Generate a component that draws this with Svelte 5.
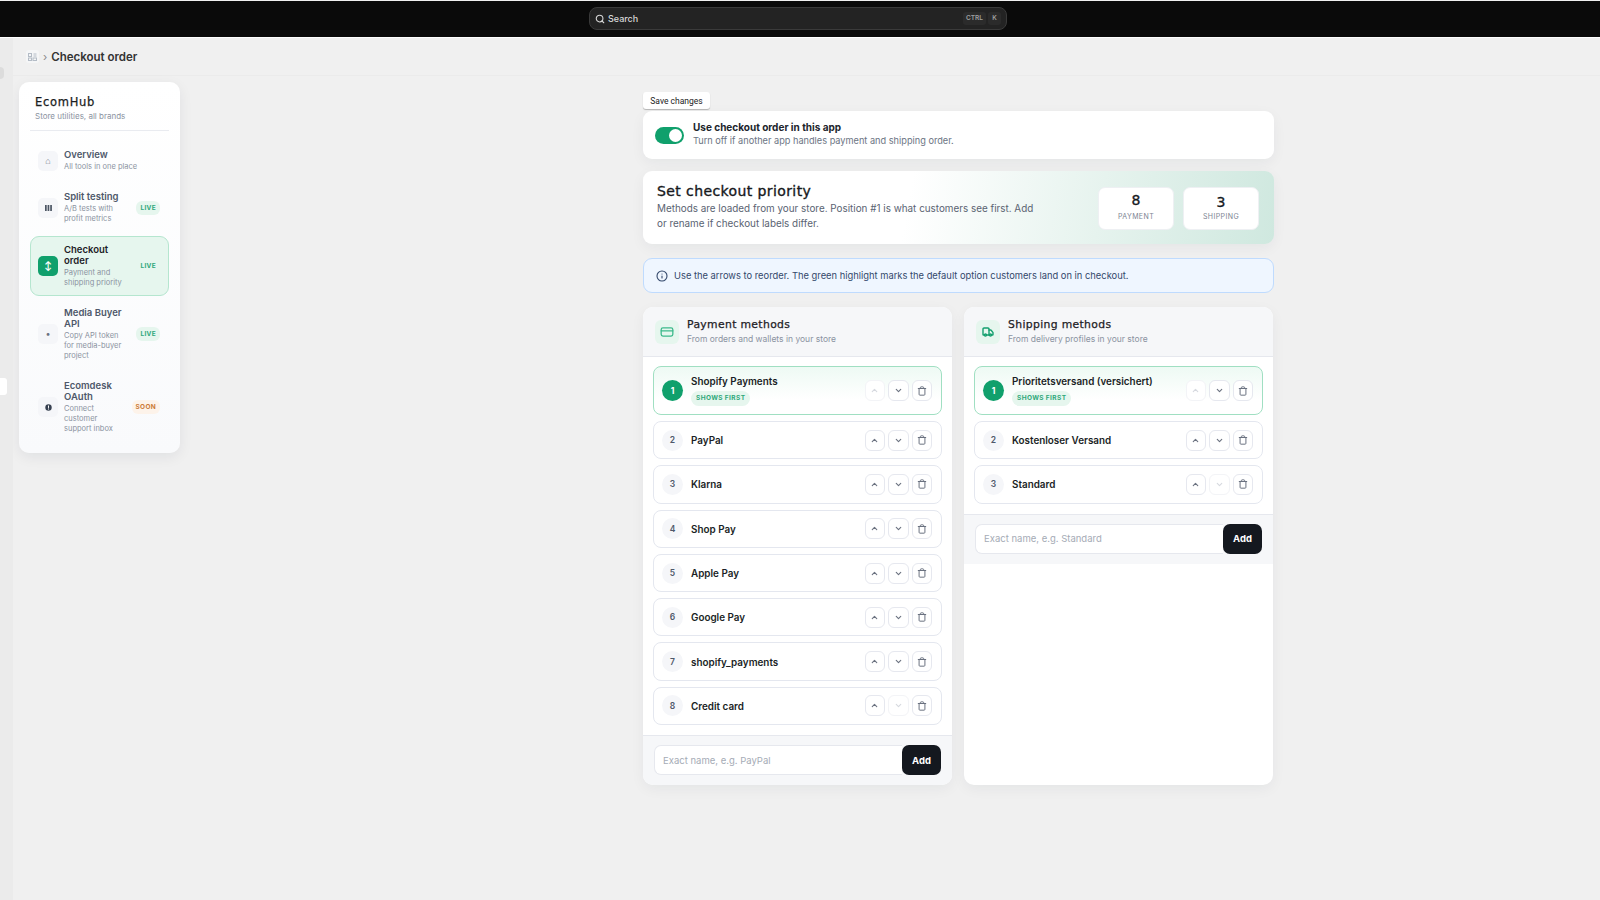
<script>
	let enabled = $state(true);
	let payment = $state(['Shopify Payments', 'PayPal', 'Klarna', 'Shop Pay', 'Apple Pay', 'Google Pay', 'shopify_payments', 'Credit card']);
	let shipping = $state(['Prioritetsversand (versichert)', 'Kostenloser Versand', 'Standard']);

	const nav = [
		{ name: 'Overview', desc: 'All tools in one place', icon: '⌂' },
		{ name: 'Split testing', desc: 'A/B tests with profit metrics', icon: 'bars', tag: 'LIVE' },
		{ name: 'Checkout order', desc: 'Payment and shipping priority', icon: '↕', tag: 'LIVE', active: true },
		{ name: 'Media Buyer API', desc: 'Copy API token for media-buyer project', icon: '•', tag: 'LIVE' },
		{ name: 'Ecomdesk OAuth', desc: 'Connect customer support inbox', icon: 'dot', tag: 'SOON' }
	];

	const columns = [
		{ title: 'Payment methods', sub: 'From orders and wallets in your store', icon: 'card', hint: 'Exact name, e.g. PayPal', get: () => payment },
		{ title: 'Shipping methods', sub: 'From delivery profiles in your store', icon: 'truck', hint: 'Exact name, e.g. Standard', get: () => shipping }
	];

	function move(list, i, d) {
		const tmp = list[i];
		list[i] = list[i + d];
		list[i + d] = tmp;
	}
</script>

<div class="topbar">
	<div class="search">
		<svg width="10" height="10" viewBox="0 0 24 24" fill="none" stroke="#d8d8d8" stroke-width="2.6" stroke-linecap="round"><circle cx="11" cy="11" r="8" /><path d="m21 21-4.3-4.3" /></svg>
		<span class="search-label">Search</span>
		<kbd>CTRL</kbd>
		<kbd class="k">K</kbd>
	</div>
</div>

<div class="page">
	<div class="rail">
		<span class="rail-pill"></span>
		<span class="rail-tab"></span>
	</div>
	<div class="main">
		<header class="crumb">
			<span class="crumb-icon">
				<svg width="9" height="8" viewBox="0 0 9 8" fill="none" stroke="#b4bcc6" stroke-width="1"><rect x=".5" y=".5" width="3" height="3" /><path d="M5.5 1h3M5.5 3h3" /><rect x=".5" y="5" width="3" height="2.5" /><rect x="5" y="5" width="3.5" height="2.5" /></svg>
			</span>
			<span class="crumb-sep">›</span>
			<span class="crumb-title">Checkout order</span>
		</header>

		<div class="body">
			<aside class="side">
				<div class="brand">EcomHub</div>
				<div class="brand-sub">Store utilities, all brands</div>
				<nav>
					{#each nav as item}
						<div class="nav-item" class:active={item.active}>
							<span class="nav-icon">
								{#if item.icon === 'bars'}
									<svg width="7" height="6" viewBox="0 0 7 6" fill="#4b5563"><rect width="1.7" height="6" /><rect x="2.6" width="1.7" height="6" /><rect x="5.2" width="1.7" height="6" /></svg>
								{:else if item.icon === 'dot'}
									<svg width="7" height="7" viewBox="0 0 7 7"><circle cx="3.5" cy="3.5" r="3.2" fill="#374151" /><rect x="3" y="1.5" width="1" height="2.4" fill="#fff" /><rect x="3" y="4.5" width="1" height="1" fill="#fff" /></svg>
								{:else}
									{item.icon}
								{/if}
							</span>
							<div class="nav-text">
								<div class="nav-name">{item.name}</div>
								<div class="nav-desc">{item.desc}</div>
							</div>
							{#if item.tag}
								<span class="tag" class:soon={item.tag === 'SOON'}>{item.tag}</span>
							{/if}
						</div>
					{/each}
				</nav>
			</aside>

			<div class="content">
				<button class="save">Save changes</button>

				<section class="switch-card">
					<button class="toggle" class:off={!enabled} aria-label="Toggle" onclick={() => (enabled = !enabled)}><span></span></button>
					<div class="switch-text">
						<div class="switch-title">Use checkout order in this app</div>
						<div class="switch-sub">Turn off if another app handles payment and shipping order.</div>
					</div>
				</section>

				<section class="hero">
					<div class="hero-text">
						<h1>Set checkout priority</h1>
						<p>Methods are loaded from your store. Position #1 is what customers see first. Add or rename if checkout labels differ.</p>
					</div>
					<div class="stat"><b>{payment.length}</b><span>PAYMENT</span></div>
					<div class="stat"><b class="low">{shipping.length}</b><span>SHIPPING</span></div>
				</section>

				<div class="info">
					<svg width="12" height="12" viewBox="0 0 24 24" fill="none" stroke="#33486b" stroke-width="2.2" stroke-linecap="round"><circle cx="12" cy="12" r="10" /><path d="M12 16v-4M12 8h.01" /></svg>
					Use the arrows to reorder. The green highlight marks the default option customers land on in checkout.
				</div>

				<div class="columns">
					{#each columns as col}
						{@const list = col.get()}
						<section class="col">
							<div class="col-head">
								<span class="col-icon">
									{#if col.icon === 'card'}
										<svg width="14" height="14" viewBox="0 0 24 24" fill="none" stroke="#3cb98b" stroke-width="2.2" stroke-linecap="round" stroke-linejoin="round"><rect x="2" y="5" width="20" height="14" rx="3" /><path d="M2 10h20" /></svg>
									{:else}
										<svg width="12" height="12" viewBox="0 0 24 24" fill="none" stroke="#14a06f" stroke-width="2.8" stroke-linecap="round" stroke-linejoin="round"><path d="M14 18V6a2 2 0 0 0-2-2H4a2 2 0 0 0-2 2v11a1 1 0 0 0 1 1h2" /><path d="M15 18H9" /><path d="M19 18h2a1 1 0 0 0 1-1v-3.65a1 1 0 0 0-.22-.62l-3.48-4.35A1 1 0 0 0 17.52 8H14" /><circle cx="17" cy="18" r="2" /><circle cx="7" cy="18" r="2" /></svg>
									{/if}
								</span>
								<div class="col-title">
									<h2>{col.title}</h2>
									<div class="col-sub">{col.sub}</div>
								</div>
							</div>
							<div class="rows">
								{#each list as name, i}
									<div class="row" class:first={i === 0}>
										<span class="num">{i + 1}</span>
										<div class="row-name">
											<div>{name}</div>
											{#if i === 0}<span class="chip">SHOWS FIRST</span>{/if}
										</div>
										<button class="act" disabled={i === 0} aria-label="Move up" onclick={() => move(list, i, -1)}>
											<svg width="9" height="9" viewBox="0 0 24 24" fill="none" stroke="currentColor" stroke-width="3" stroke-linecap="round" stroke-linejoin="round"><path d="m6 15 6-6 6 6" /></svg>
										</button>
										<button class="act" disabled={i === list.length - 1} aria-label="Move down" onclick={() => move(list, i, 1)}>
											<svg width="9" height="9" viewBox="0 0 24 24" fill="none" stroke="currentColor" stroke-width="3" stroke-linecap="round" stroke-linejoin="round"><path d="m6 9 6 6 6-6" /></svg>
										</button>
										<button class="act" aria-label="Remove" onclick={() => list.splice(i, 1)}>
											<svg width="10" height="10" viewBox="0 0 24 24" fill="none" stroke="currentColor" stroke-width="2.4" stroke-linecap="round" stroke-linejoin="round"><path d="M3 6h18" /><path d="M19 6v14a2 2 0 0 1-2 2H7a2 2 0 0 1-2-2V6" /><path d="M8 6V4a2 2 0 0 1 2-2h4a2 2 0 0 1 2 2v2" /></svg>
										</button>
									</div>
								{/each}
							</div>
							<div class="add">
								<input placeholder={col.hint} />
								<button>Add</button>
							</div>
						</section>
					{/each}
				</div>
			</div>
		</div>
	</div>
</div>

<style>
	:global(body) {
		background: #f0f0f0;
		font-family: 'Inter', 'Liberation Sans', sans-serif;
		color: #15191f;
		height: 900px;
		overflow: hidden;
	}

	.topbar {
		height: 36px;
		margin-top: 1px;
		background: #0a0a0a;
		display: flex;
		justify-content: center;
		align-items: center;
		border-bottom: 1px solid #fff;
		padding-right: 4px;
	}

	.search {
		width: 418px;
		height: 23px;
		box-sizing: border-box;
		margin-bottom: 1px;
		background: #232323;
		border: 1px solid #3a3a3a;
		border-radius: 8px;
		display: flex;
		align-items: center;
		padding: 0 5px;
		gap: 2px;
		color: #d8d8d8;
		font-size: 9px;
		font-weight: 500;
	}

	.search-label {
		flex: 1;
		margin-left: 1px;
	}

	kbd {
		font-family: inherit;
		font-size: 6.5px;
		font-weight: 600;
		color: #a0a0a0;
		background: #2b2b2b;
		border-radius: 3px;
		width: 23px;
		line-height: 13px;
		text-align: center;
	}

	kbd.k {
		width: 13px;
	}

	.page {
		display: flex;
		height: 862px;
	}

	.rail {
		width: 13px;
		flex: none;
		background: #ebebeb;
		position: relative;
	}

	.rail-pill {
		position: absolute;
		left: 0;
		top: 29px;
		width: 4px;
		height: 12px;
		border-radius: 0 4px 4px 0;
		background: #dcdcdc;
	}

	.rail-tab {
		position: absolute;
		left: 0;
		top: 340px;
		width: 7px;
		height: 17px;
		border-radius: 0 3px 3px 0;
		background: #fff;
	}

	.main {
		flex: 1;
		min-width: 0;
	}

	.crumb {
		height: 38px;
		box-sizing: border-box;
		border-bottom: 1px solid #ebebeb;
		display: flex;
		align-items: center;
		padding-left: 13px;
		gap: 4px;
	}

	.crumb-icon {
		width: 13px;
		height: 13px;
		background: #f5f6f7;
		border-radius: 3px;
		display: flex;
		align-items: center;
		justify-content: center;
	}

	.crumb-sep {
		color: #8a8a8a;
		font-size: 11px;
	}

	.crumb-title {
		font-size: 11.5px;
		font-weight: 600;
		color: #333;
	}

	.body {
		display: flex;
		align-items: flex-start;
		padding: 6px 0 0 6px;
	}

	.side {
		width: 161px;
		flex: none;
		box-sizing: border-box;
		background: linear-gradient(180deg, #fff 0%, #f9fafc 100%);
		border-radius: 10px;
		padding: 14px 11px 11px 11px;
		box-shadow: 0 4px 14px rgba(20, 30, 50, 0.07);
	}

	.brand {
		font-family: 'DejaVu Sans', sans-serif;
		font-size: 11.5px;
		letter-spacing: 0.7px;
		-webkit-text-stroke: 0.25px #1a1d22;
		padding-left: 5px;
		line-height: 13px;
		color: #1a1d22;
	}

	.brand-sub {
		font-size: 8px;
		color: #8b93a1;
		padding: 2px 0 8px 5px;
		border-bottom: 1px solid #e9ebf0;
		line-height: 11px;
	}

	nav {
		display: flex;
		flex-direction: column;
		gap: 3.3px;
		padding-top: 10px;
	}

	.nav-item {
		display: flex;
		align-items: center;
		gap: 6px;
		padding: 7px 8px 7px 7px;
		border-radius: 9px;
		border: 1px solid transparent;
	}

	.nav-item.active {
		background: #e6f6ee;
		border-color: #b5e6cf;
	}

	.nav-icon {
		width: 20px;
		height: 20px;
		flex: none;
		border-radius: 5px;
		background: #f5f6f9;
		color: #6b7280;
		font-size: 9px;
		display: flex;
		align-items: center;
		justify-content: center;
	}

	.active .nav-icon {
		background: #10a06c;
		color: #fff;
		font-weight: 700;
	}

	.nav-text {
		flex: 1;
		min-width: 0;
		padding-right: 4px;
	}

	.nav-name {
		font-size: 9.5px;
		font-weight: 600;
		color: #4e586a;
		line-height: 11px;
	}

	.active .nav-name {
		color: #1d2127;
	}

	.nav-desc {
		font-size: 7.5px;
		color: #8b93a1;
		line-height: 10px;
		margin-top: 2px;
	}

	.tag {
		flex: none;
		font-size: 6.5px;
		font-weight: 700;
		letter-spacing: 0.3px;
		color: #2fa87a;
		background: #e6f6ee;
		border-radius: 6px;
		padding: 3px 4px;
	}

	.tag.soon {
		color: #cc7a35;
		background: #fdf3ea;
	}

	.content {
		width: 631px;
		margin-left: 463px;
		flex: none;
		padding-top: 10px;
	}

	.save {
		display: block;
		font-family: 'Roboto', sans-serif;
		font-size: 8.5px;
		color: #222;
		background: #fff;
		border: none;
		border-radius: 3px;
		height: 17px;
		width: 67px;
		padding: 0;
		box-shadow: 0 1px 1px rgba(0, 0, 0, 0.25);
	}

	.switch-card {
		margin-top: 2px;
		height: 48px;
		box-sizing: border-box;
		background: #fff;
		border-radius: 9px;
		display: flex;
		align-items: center;
		padding-left: 12px;
		gap: 9px;
		box-shadow: 0 4px 14px rgba(20, 30, 50, 0.05);
	}

	.switch-text {
		padding-bottom: 2px;
	}

	.toggle {
		width: 29px;
		height: 17px;
		border-radius: 9px;
		border: none;
		padding: 0;
		background: #10a06c;
		display: flex;
		align-items: center;
		justify-content: flex-end;
	}

	.toggle.off {
		background: #c8ccd2;
		justify-content: flex-start;
	}

	.toggle span {
		width: 13px;
		height: 13px;
		border-radius: 50%;
		background: #fff;
		margin: 0 2px;
	}

	.switch-title {
		font-size: 10px;
		font-weight: 700;
		line-height: 13px;
		color: #20242b;
	}

	.switch-sub {
		font-size: 9.2px;
		line-height: 13px;
		color: #6b7483;
	}

	.hero {
		margin-top: 12px;
		height: 73px;
		box-sizing: border-box;
		border-radius: 9px;
		background: linear-gradient(100deg, #fff 42%, #e6f3ee 72%, #cfe8df 100%);
		display: flex;
		align-items: center;
		padding: 2px 15px 0 14px;
		gap: 9px;
		box-shadow: 0 4px 14px rgba(20, 30, 50, 0.05);
	}

	.hero-text {
		flex: 1;
		padding: 0 50px 4px 0;
	}

	h1 {
		font-family: 'DejaVu Sans', sans-serif;
		font-size: 14px;
		letter-spacing: 0.4px;
		font-weight: 400;
		-webkit-text-stroke: 0.35px #17191d;
		margin: 0 0 1px;
		line-height: 17px;
		color: #17191d;
	}

	.hero p {
		margin: 0;
		font-size: 9.9px;
		line-height: 14.5px;
		color: #5a6372;
	}

	.stat {
		width: 76px;
		height: 43px;
		flex: none;
		background: #fff;
		border: 1px solid #eef0f3;
		box-sizing: border-box;
		border-radius: 7px;
		display: flex;
		flex-direction: column;
		align-items: center;
		justify-content: center;
		padding-bottom: 2px;
	}

	.stat b {
		font-family: 'DejaVu Sans', sans-serif;
		font-size: 14px;
		font-weight: 400;
		-webkit-text-stroke: 0.35px #17191d;
		line-height: 15px;
		margin-bottom: 4px;
	}

	.stat b.low {
		margin-top: 2px;
		margin-bottom: 2px;
	}

	.stat span {
		font-size: 7px;
		letter-spacing: 0.4px;
		color: #7c8493;
		line-height: 10px;
	}

	.info {
		margin-top: 14px;
		height: 35px;
		box-sizing: border-box;
		background: #eff6ff;
		border: 1px solid #bfdbfe;
		border-radius: 9px;
		display: flex;
		align-items: center;
		gap: 6px;
		padding-left: 12px;
		font-size: 9.35px;
		color: #33486b;
	}

	.columns {
		margin-top: 14px;
		display: grid;
		grid-template-columns: 309px 309px;
		gap: 12px;
		width: 630px;
	}

	.col {
		height: 478px;
		background: #fff;
		border-radius: 10px;
		overflow: hidden;
		box-shadow: 0 4px 14px rgba(20, 30, 50, 0.05);
	}

	.col-head {
		height: 50px;
		box-sizing: border-box;
		background: #f6f7f9;
		border-bottom: 1px solid #e6e8ee;
		display: flex;
		align-items: center;
		gap: 8px;
		padding-left: 12px;
	}

	.col-title {
		padding-bottom: 1px;
	}

	.col-icon {
		width: 24px;
		height: 24px;
		background: #e6f6ee;
		border-radius: 6px;
		display: flex;
		align-items: center;
		justify-content: center;
	}

	h2 {
		font-family: 'DejaVu Sans', sans-serif;
		font-size: 10.8px;
		letter-spacing: 0.35px;
		font-weight: 400;
		-webkit-text-stroke: 0.25px #1d2025;
		margin: 0;
		line-height: 14px;
		color: #1d2025;
	}

	.col-sub {
		font-size: 8.5px;
		color: #8b93a1;
		line-height: 12px;
		margin-top: 1px;
	}

	.rows {
		padding: 9px 10px 10px;
		display: flex;
		flex-direction: column;
		gap: 6px;
	}

	.row {
		height: 38.3px;
		box-sizing: border-box;
		border: 1px solid #e4e7ef;
		border-radius: 8px;
		display: flex;
		align-items: center;
		padding: 0 9px 0 8px;
		gap: 3px;
		background: #fff;
	}

	.row.first {
		height: 49px;
		border-color: #a0dfc2;
		background: linear-gradient(180deg, #eefaf4 0%, #fff 70%);
	}

	.num {
		width: 21px;
		height: 21px;
		flex: none;
		border-radius: 50%;
		background: #f5f6f9;
		color: #4e586a;
		font-size: 8.5px;
		font-weight: 600;
		display: flex;
		align-items: center;
		justify-content: center;
	}

	.first .num {
		background: #10a06c;
		color: #fff;
		font-weight: 700;
	}

	.row-name {
		flex: 1;
		min-width: 0;
		margin-left: 5px;
		font-size: 9.9px;
		font-weight: 600;
		color: #1b1f26;
	}

	.first .row-name {
		padding-bottom: 1px;
	}

	.chip {
		display: inline-block;
		font-size: 6.5px;
		font-weight: 700;
		letter-spacing: 0.4px;
		color: #2fa87a;
		background: #e6f6ee;
		border-radius: 8px;
		padding: 0 5px;
		line-height: 15px;
		margin-top: 4px;
	}

	.act {
		width: 20.5px;
		height: 21px;
		flex: none;
		padding: 0;
		box-sizing: border-box;
		background: #fff;
		border: 1px solid #e6e8ef;
		border-radius: 6px;
		color: #6b7280;
		display: flex;
		align-items: center;
		justify-content: center;
	}

	.act:disabled {
		border-color: #f3f4f7;
		color: #d6d9df;
	}

	.add {
		height: 50px;
		box-sizing: border-box;
		background: #f6f7f9;
		border-top: 1px solid #e6e8ee;
		display: flex;
		padding: 9px 11px 10px;
	}

	.add input {
		flex: 1;
		min-width: 0;
		box-sizing: border-box;
		font-family: inherit;
		font-size: 9.5px;
		background: #fff;
		border: 1px solid #e6e8ee;
		border-radius: 7px 0 0 7px;
		border-right: none;
		padding: 0 8px;
		outline: none;
	}

	.add input::placeholder {
		color: #a5abb6;
	}

	.add button {
		width: 39px;
		flex: none;
		border: none;
		background: #14181f;
		color: #fff;
		font-family: inherit;
		font-size: 9.5px;
		font-weight: 700;
		border-radius: 7px;
		padding: 0;
	}
</style>
